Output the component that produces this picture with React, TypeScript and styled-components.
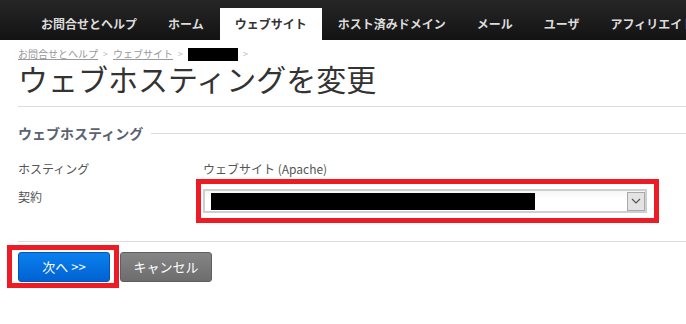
import React from 'react';
import styled, { createGlobalStyle } from 'styled-components';

const Global = createGlobalStyle`
  html, body { margin: 0; padding: 0; background: #fff; }
  body {
    font-family: "Noto Sans CJK JP", "Noto Sans", sans-serif;
    width: 686px;
    height: 324px;
    overflow: hidden;
  }
`;

const NavBar = styled.nav`
  height: 40px;
  background: linear-gradient(#262626, #131313);
  display: flex;
  align-items: flex-end;
  gap: 1px;
  padding-left: 26px;
  overflow: hidden;
  white-space: nowrap;
`;

const NavItem = styled.a<{ $active?: boolean }>`
  flex-shrink: 0;
  height: 32px;
  line-height: 32px;
  padding: 0 15px;
  font-size: 12px;
  font-weight: 700;
  text-decoration: none;
  color: ${p => (p.$active ? '#333' : '#dcdcdc')};
  background: ${p => (p.$active ? '#fff' : 'transparent')};
`;

const Main = styled.main`
  padding-left: 18px;
`;

const Breadcrumb = styled.div`
  margin-top: 7px;
  height: 14px;
  display: flex;
  align-items: center;
  gap: 5px;
  font-size: 10px;
  line-height: 14px;
  color: #999;
`;

const Crumb = styled.a`
  color: #999;
  text-decoration: underline;
`;

const Sep = styled.span`
  color: #bbb;
  font-size: 9px;
`;

const Redacted = styled.span<{ $w: number; $h: number }>`
  display: inline-block;
  width: ${p => p.$w}px;
  height: ${p => p.$h}px;
  background: #000;
`;

const Title = styled.h1`
  margin: 0;
  font-size: 30px;
  line-height: 34px;
  font-weight: 400;
  color: #333;
`;

const Divider = styled.hr<{ $top: number }>`
  margin: ${p => p.$top}px 0 0;
  border: 0;
  border-top: 1px solid #ddd;
  height: 0;
`;

const SectionHead = styled.div`
  margin-top: 16px;
  display: flex;
  align-items: center;
  gap: 8px;
  font-size: 14px;
  line-height: 20px;
  font-weight: 700;
  color: #5b6270;
  &::after {
    content: '';
    flex: 1;
    border-top: 1px solid #ddd;
  }
`;

const Rows = styled.div`
  margin-top: 16px;
  display: flex;
  flex-direction: column;
  gap: 8px;
`;

const Row = styled.div`
  display: grid;
  grid-template-columns: 185px 1fr;
  align-items: start;
  font-size: 12px;
  line-height: 20px;
  color: #555;
`;

const Label = styled.span``;

const Value = styled.span`
  color: #555;
`;

const Annotated = styled.div<{ $t: number; $r: number; $b: number; $l: number }>`
  position: relative;
  display: inline-block;
  &::after {
    content: '';
    position: absolute;
    top: -${p => p.$t}px;
    right: -${p => p.$r}px;
    bottom: -${p => p.$b}px;
    left: -${p => p.$l}px;
    border: 5px solid #ed1c24;
    pointer-events: none;
  }
`;

const Select = styled.div`
  margin-top: 2px;
  box-sizing: border-box;
  width: 444px;
  height: 24px;
  border: 2px solid #cfcfcf;
  background: linear-gradient(#f6f6f6, #fff 40%);
  display: flex;
  align-items: center;
  justify-content: space-between;
  padding: 0 0 0 6px;
`;

const DropBtn = styled.span`
  box-sizing: border-box;
  width: 18px;
  height: 19px;
  border: 1px solid #a9a9a9;
  background: #e3e3e3;
  display: flex;
  align-items: center;
  justify-content: center;
`;

const Actions = styled.div`
  margin-top: 10px;
  display: flex;
  gap: 10px;
`;

const Button = styled.button<{ $primary?: boolean }>`
  box-sizing: border-box;
  width: 92px;
  height: 30px;
  border-radius: 3px;
  font-family: inherit;
  font-size: 13px;
  color: #fff;
  cursor: pointer;
  border: 1px solid ${p => (p.$primary ? '#0055b8' : '#5f5f5f')};
  background: ${p =>
    p.$primary
      ? 'linear-gradient(#0b80ee, #0062d2)'
      : 'linear-gradient(#858585, #6d6d6d)'};
`;

export default function App() {
  const nav = ['お問合せとヘルプ', 'ホーム', 'ウェブサイト', 'ホスト済みドメイン', 'メール', 'ユーザ', 'アフィリエイト'];
  return (
    <>
      <Global />
      <NavBar>
        {nav.map(n => (
          <NavItem key={n} $active={n === 'ウェブサイト'}>
            {n}
          </NavItem>
        ))}
      </NavBar>
      <Main>
        <Breadcrumb>
          <Crumb>お問合せとヘルプ</Crumb>
          <Sep>&gt;</Sep>
          <Crumb>ウェブサイト</Crumb>
          <Sep>&gt;</Sep>
          <Redacted $w={50} $h={13} />
          <Sep>&gt;</Sep>
        </Breadcrumb>
        <Title>ウェブホスティングを変更</Title>
        <Divider $top={11} />
        <SectionHead>ウェブホスティング</SectionHead>
        <Rows>
          <Row>
            <Label>ホスティング</Label>
            <Value>ウェブサイト (Apache)</Value>
          </Row>
          <Row>
            <Label>契約</Label>
            <div>
              <Annotated $t={8} $r={12} $b={10} $l={7}>
                <Select>
                  <Redacted $w={324} $h={17} />
                  <DropBtn>
                    <svg width="10" height="6" viewBox="0 0 10 6">
                      <path d="M1 1 L5 5 L9 1" fill="none" stroke="#555" strokeWidth="1.2" />
                    </svg>
                  </DropBtn>
                </Select>
              </Annotated>
            </div>
          </Row>
        </Rows>
        <Divider $top={26} />
        <Actions>
          <Annotated $t={7} $r={9} $b={6} $l={11}>
            <Button $primary>次へ &gt;&gt;</Button>
          </Annotated>
          <Button>キャンセル</Button>
        </Actions>
      </Main>
    </>
  );
}
